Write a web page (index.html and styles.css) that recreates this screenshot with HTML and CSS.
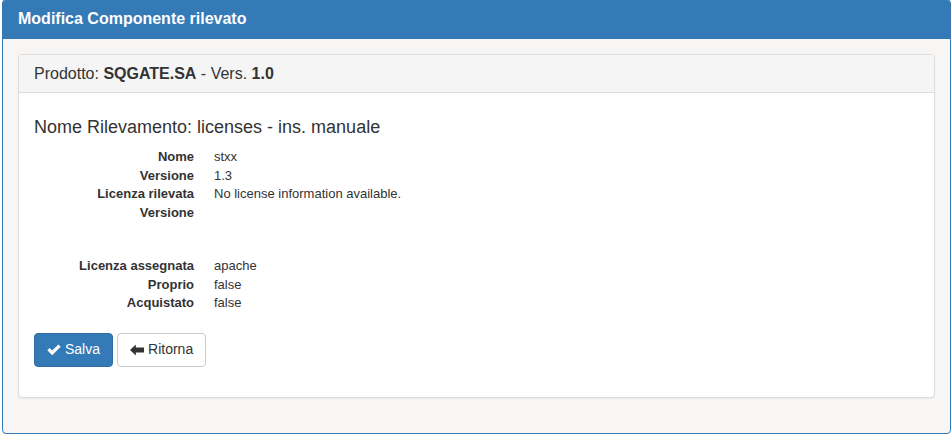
FILE: index.html
```html
<!DOCTYPE html>
<html lang="it">
<head>
<meta charset="utf-8">
<title>Modifica Componente rilevato</title>
<link rel="stylesheet" href="styles.css">
</head>
<body>
<div class="panel panel-primary">
  <div class="panel-heading">
    <h3 class="panel-title">Modifica Componente rilevato</h3>
  </div>
  <div class="panel-body">
    <div class="panel panel-default">
      <div class="panel-heading">
        <h3 class="panel-title inner-title">Prodotto: <b>SQGATE.SA</b> - Vers. <b>1.0</b></h3>
      </div>
      <div class="panel-body inner-body">
        <h4 class="section-title">Nome Rilevamento: licenses - ins. manuale</h4>
        <dl class="dl-horizontal">
          <dt>Nome</dt><dd>stxx</dd>
          <dt>Versione</dt><dd>1.3</dd>
          <dt>Licenza rilevata</dt><dd>No license information available.</dd>
          <dt>Versione</dt><dd></dd>
        </dl>
        <dl class="dl-horizontal second">
          <dt>Licenza assegnata</dt><dd>apache</dd>
          <dt>Proprio</dt><dd>false</dd>
          <dt>Acquistato</dt><dd>false</dd>
        </dl>
        <div class="actions">
          <button class="btn btn-primary" type="button">
            <svg class="icon" width="14" height="12" viewBox="0 0 14 12" aria-hidden="true"><path d="M0.3 6.3 L2.6 4 L5.2 6.6 L11.4 0.4 L13.7 2.7 L5.2 11.2 Z" fill="currentColor"/></svg>
            Salva
          </button>
          <button class="btn btn-default" type="button">
            <svg class="icon" width="14" height="12" viewBox="0 0 14 12" aria-hidden="true"><path d="M0 6 L5.8 0.4 L5.8 3.6 L14 3.6 L14 8.4 L5.8 8.4 L5.8 11.6 Z" fill="currentColor"/></svg>
            Ritorna
          </button>
        </div>
      </div>
    </div>
  </div>
</div>
</body>
</html>
```

FILE: styles.css
```css
* { box-sizing: border-box; }
html, body { margin: 0; padding: 0; }
body {
  background: #ffffff;
  font-family: "Liberation Sans", Arial, Helvetica, sans-serif;
  font-size: 13px;
  line-height: 1.42857;
  color: #333333;
}
.panel {
  border: 1px solid transparent;
  border-radius: 4px;
  box-shadow: 0 1px 1px rgba(0,0,0,0.05);
}
.panel-primary {
  margin: -1px 1px 0 2px;
  border-color: #337ab7;
  background: #f7f6f4;
}
.panel-primary > .panel-heading {
  background: #337ab7;
  color: #ffffff;
  padding: 10px 15px;
  border-bottom: 1px solid #337ab7;
  border-radius: 3px 3px 0 0;
}
.panel-title {
  margin: 0;
  font-size: 16px;
  font-weight: bold;
  line-height: 1.1;
}
.panel-body {
  padding: 15px;
}
.panel-default {
  border-color: #dddddd;
  background: #ffffff;
  margin-bottom: 20px;
}
.panel-default > .panel-heading {
  background: #f5f5f5;
  color: #333333;
  padding: 10px 15px;
  border-bottom: 1px solid #dddddd;
  border-radius: 3px 3px 0 0;
}
.inner-title {
  font-weight: normal;
}
.inner-title b { font-weight: bold; }
.section-title {
  margin: 10px 0 10px;
  font-size: 18px;
  font-weight: 500;
  line-height: 1.1;
}
.dl-horizontal {
  display: grid;
  grid-template-columns: 160px 1fr;
  column-gap: 20px;
  margin: 0 0 20px;
}
.dl-horizontal dt {
  font-weight: bold;
  text-align: right;
  white-space: nowrap;
}
.dl-horizontal dd {
  margin: 0;
}
.dl-horizontal.second {
  margin-top: 35px;
  margin-bottom: 20px;
}
.actions {
  display: flex;
  gap: 4px;
  margin-bottom: 15px;
}
.btn {
  display: inline-flex;
  align-items: center;
  gap: 4px;
  height: 34px;
  padding: 6px 12px;
  font-family: "Liberation Sans", Arial, sans-serif;
  font-size: 14px;
  line-height: 1.42857;
  border: 1px solid transparent;
  border-radius: 4px;
  cursor: pointer;
}
.btn-primary {
  background: #337ab7;
  border-color: #2e6da4;
  color: #ffffff;
}
.btn-default {
  background: #ffffff;
  border-color: #cccccc;
  color: #333333;
}
.icon { display: block; flex: none; }
```
